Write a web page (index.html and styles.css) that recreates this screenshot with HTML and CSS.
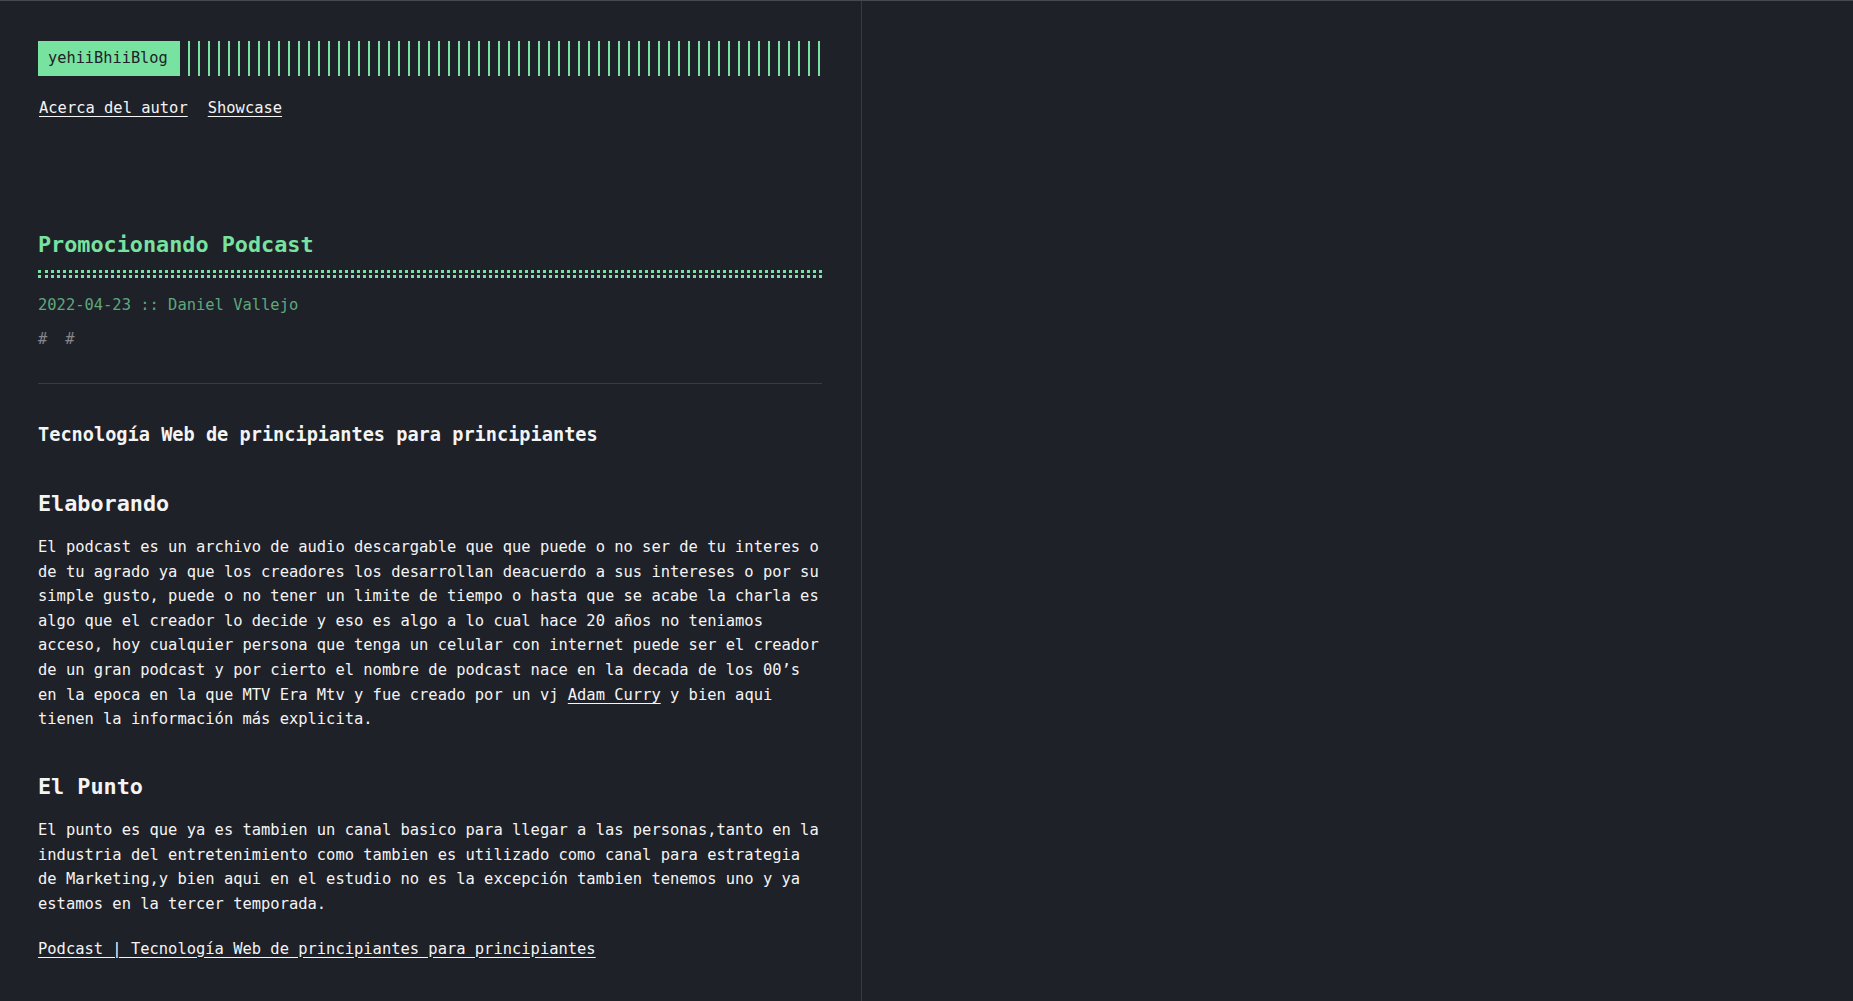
FILE: index.html
```html
<!DOCTYPE html>
<html lang="es">
<head>
<meta charset="utf-8">
<title>Promocionando Podcast :: yehiiBhiiBlog</title>
<link rel="stylesheet" href="styles.css">
</head>
<body>
<div class="container">
  <header class="header">
    <div class="header-logo">
      <a class="logo" href="#">yehiiBhiiBlog</a>
      <span class="logo-lines"></span>
    </div>
    <nav class="menu">
      <a href="#">Acerca del autor</a>
      <a href="#">Showcase</a>
    </nav>
  </header>
  <main class="post">
    <h1 class="post-title">Promocionando Podcast</h1>
    <div class="post-meta">2022-04-23 :: Daniel Vallejo</div>
    <div class="post-tags"><span class="tag">#</span><span class="tag">#</span></div>
    <hr class="post-sep">
    <div class="post-content">
      <h3>Tecnología Web de principiantes para principiantes</h3>
      <h2 class="first">Elaborando</h2>
      <p>El podcast es un archivo de audio descargable que que puede o no ser de tu interes o de tu agrado ya que los creadores los desarrollan deacuerdo a sus intereses o por su simple gusto, puede o no tener un limite de tiempo o hasta que se acabe la charla es algo que el creador lo decide y eso es algo a lo cual hace 20 años no teniamos acceso, hoy cualquier persona que tenga un celular con internet puede ser el creador de un gran podcast y por cierto el nombre de podcast nace en la decada de los 00’s en la epoca en la que MTV Era Mtv y fue creado por un vj <a href="#">Adam Curry</a> y bien aqui tienen la información más explicita.</p>
      <h2>El Punto</h2>
      <p>El punto es que ya es tambien un canal basico para llegar a las personas,tanto en la industria del entretenimiento como tambien es utilizado como canal para estrategia de Marketing,y bien aqui en el estudio no es la excepción tambien tenemos uno y ya estamos en la tercer temporada.</p>
      <p class="last"><a href="#">Podcast | Tecnología Web de principiantes para principiantes</a></p>
    </div>
  </main>
</div>
</body>
</html>
```

FILE: styles.css
```css
html, body {
  margin: 0;
  padding: 0;
}

body {
  background: #1f2129;
  color: #f4f4f4;
  font-family: "DejaVu Sans Mono", "Liberation Mono", monospace;
  font-size: 15.45px;
  line-height: 24.64px;
  border-top: 1px solid #474951;
  min-height: 1000px;
  box-sizing: border-box;
}

a {
  color: #f4f4f4;
  text-decoration: underline;
  text-underline-offset: 3px;
}

.container {
  width: 784px;
  padding: 40px 39px 40px 38px;
  border-right: 1px solid #383a42;
  min-height: 920px;
}

.header-logo {
  display: flex;
  align-items: stretch;
  height: 35px;
}

.logo {
  display: block;
  background: #78e2a0;
  color: #1f2129;
  text-decoration: none;
  padding: 5px 12px 5px 10px;
  font-size: 15.3px;
}

.logo-lines {
  flex: 1;
  margin-left: 8px;
  margin-right: -2px;
  background: repeating-linear-gradient(90deg, #78e2a0 0 2px, transparent 2px 10px);
}

.menu {
  display: flex;
  gap: 20px;
  margin-top: 20px;
  padding-left: 1px;
}

.post {
  margin-top: 110px;
}

.post-title {
  position: relative;
  margin: 0;
  color: #78e2a0;
  font-size: 21.8px;
  line-height: 28px;
  font-weight: bold;
  padding-bottom: 16px;
  border-bottom: 3px dotted #78e2a0;
}

.post-title::after {
  content: "";
  position: absolute;
  left: 0;
  right: 0;
  bottom: 2px;
  border-bottom: 3px dotted #78e2a0;
}

.post-meta {
  margin-top: 15px;
  color: #5da87c;
}

.post-tags {
  margin-top: 10px;
  color: #85868b;
}

.tag {
  margin-right: 18px;
}

.post-sep {
  margin: 31px 0 0;
  border: 0;
  border-top: 1px solid #393b43;
  height: 0;
}

.post-content h3 {
  margin: 39px 0 0;
  font-size: 18.6px;
  line-height: 24px;
  font-weight: bold;
}

.post-content h2 {
  margin: 42px 0 0;
  font-size: 21.8px;
  line-height: 28px;
  font-weight: bold;
}

.post-content h2.first {
  margin-top: 43px;
}

.post-content h2 + p {
  margin-top: 17px;
}

.post-content p {
  margin: 0;
}

.post-content p + h2 {
  margin-top: 41px;
}

.post-content p.last {
  margin-top: 20px;
}
```
